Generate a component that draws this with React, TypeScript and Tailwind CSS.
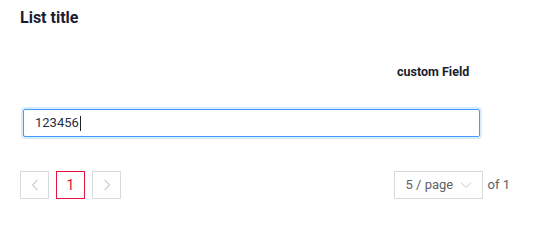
import React from "react";

export default function App() {
  return (
    <div className="w-[548px] h-[243px] bg-white" style={{ fontFamily: "Roboto, 'Noto Sans', sans-serif" }}>
      <div className="pt-[6px] pl-5">
        <div className="text-[16px] leading-[24px] font-bold text-[#1b1d33]">List title</div>
      </div>
      <div className="flex pl-[397px] pt-[34px]">
        <div className="text-[12.5px] leading-[16px] font-bold text-[#1b1d2b]">custom Field</div>
      </div>
      <div className="pl-[23px] pt-[29px]">
        <div className="w-[457px] h-[28px] border border-[#409eff] rounded-[2px] shadow-[0_0_0_2px_rgba(64,158,255,0.2)] flex items-center px-[11px]">
          <span className="text-[13px] text-[#2b2d42]">123456</span>
          <span className="w-px h-[15px] bg-[#222] ml-px" />
        </div>
      </div>
      <div className="flex items-center pl-5 pt-[34px] pr-[38px]">
        <div className="w-[29px] h-[28px] border border-[#d9d9d9] flex items-center justify-center">
          <svg width="10" height="14" viewBox="0 0 10 14" fill="none" stroke="#d0d0d0" strokeWidth="1.2">
            <path d="M7.5 2 L2.5 7 L7.5 12" />
          </svg>
        </div>
        <div className="w-[29px] h-[28px] border border-[#e0143c] ml-[7px] flex items-center justify-center text-[14px] text-[#e0143c]">1</div>
        <div className="w-[29px] h-[28px] border border-[#d9d9d9] ml-[7px] flex items-center justify-center">
          <svg width="10" height="14" viewBox="0 0 10 14" fill="none" stroke="#d0d0d0" strokeWidth="1.2">
            <path d="M2.5 2 L7.5 7 L2.5 12" />
          </svg>
        </div>
        <div className="flex-1" />
        <div className="w-[89px] h-[28px] border border-[#d9d9d9] flex items-center pl-[11px] pr-[10px]">
          <span className="text-[13px] text-[#606266]">5 / page</span>
          <div className="flex-1" />
          <svg width="12" height="8" viewBox="0 0 12 8" fill="none" stroke="#c8c8c8" strokeWidth="1">
            <path d="M1 1.5 L6 6.5 L11 1.5" />
          </svg>
        </div>
        <span className="ml-[5px] text-[13px] text-[#606266]">of 1</span>
      </div>
    </div>
  );
}
